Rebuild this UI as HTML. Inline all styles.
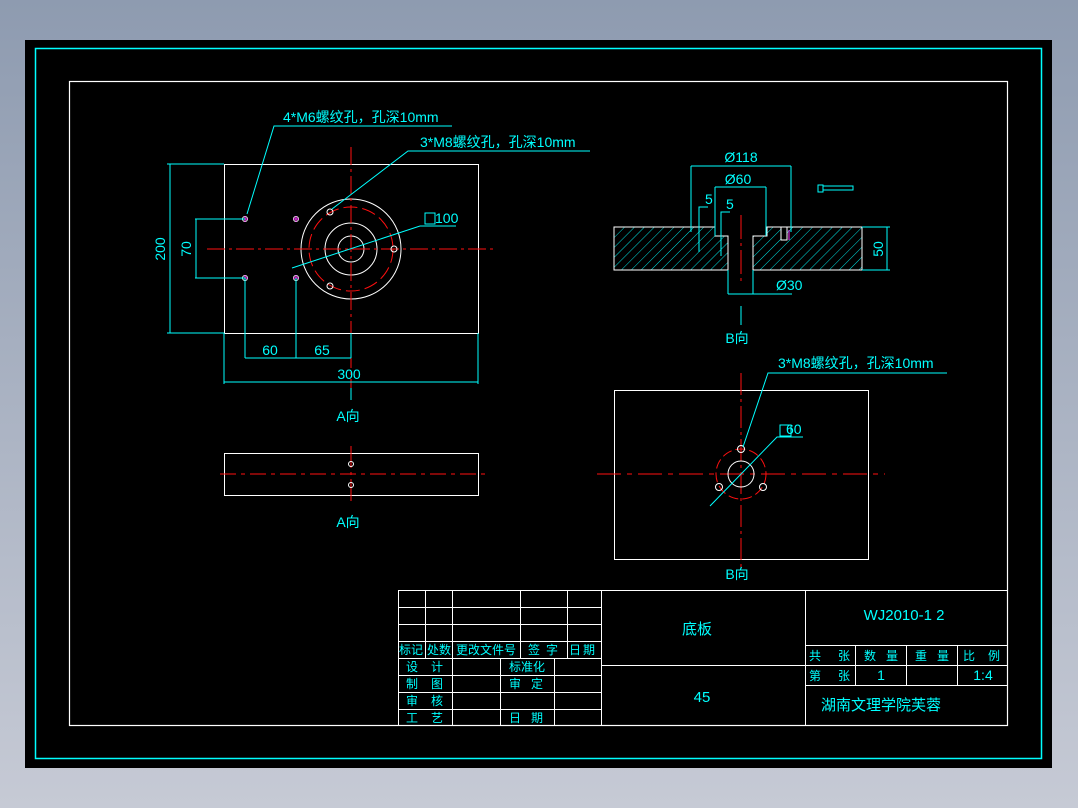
<!DOCTYPE html>
<html><head><meta charset="utf-8"><style>
html,body{margin:0;padding:0;width:1078px;height:808px;overflow:hidden;background:linear-gradient(#8e9bb0,#c6cad5);}
svg{display:block}
text{font-family:"Liberation Sans","Noto Sans CJK SC","WenQuanYi Zen Hei",sans-serif;fill:#00ffff;}
</style></head><body>
<svg width="1078" height="808" viewBox="0 0 1078 808" xmlns="http://www.w3.org/2000/svg">
<defs>
<pattern id="h" patternUnits="userSpaceOnUse" width="7" height="7" patternTransform="rotate(45)">
<line x1="0" y1="0" x2="0" y2="7" stroke="#00e0e0" stroke-width="1"/>
</pattern>
</defs>
<rect x="25" y="40" width="1027" height="728" fill="#000"/>
<rect x="35.5" y="48.5" width="1006" height="710" fill="none" stroke="#00ffff" stroke-width="1.5"/>
<rect x="69.5" y="81.5" width="938" height="644" fill="none" stroke="#fff" stroke-width="1.2"/>

<!-- top-left view -->
<g fill="none" stroke="#fff" stroke-width="1">
<rect x="224.5" y="164.5" width="254" height="169"/>
<circle cx="351" cy="249" r="50"/>
<circle cx="351" cy="249" r="26"/>
<circle cx="351" cy="249" r="13"/>
</g>
<g stroke="#ff1010" stroke-width="1" fill="none">
<line x1="351" y1="147" x2="351" y2="398" stroke-dasharray="18,4,3,4"/>
<line x1="207" y1="249" x2="495" y2="249" stroke-dasharray="18,4,3,4"/>
<circle cx="351" cy="249" r="42" stroke-dasharray="14,5"/>
</g>
<g stroke="#fff" fill="none" stroke-width="1">
<circle cx="245" cy="219" r="2.5"/><circle cx="296" cy="219" r="2.5"/>
<circle cx="245" cy="278" r="2.5"/><circle cx="296" cy="278" r="2.5"/>
<circle cx="330" cy="212" r="3"/><circle cx="330" cy="286" r="3"/><circle cx="394" cy="249" r="3"/>
</g>
<g stroke="#ff30ff" stroke-width="1">
<path d="M242,219h6M245,216v6M293,219h6M296,216v6M242,278h6M245,275v6M293,278h6M296,275v6"/>
</g>
<g stroke="#00ffff" stroke-width="1" fill="none">
<polyline points="247,214 274,126 452,126"/>
<polyline points="332,209 408,151 590,151"/>
<polyline points="292,268 420,226 456,226"/>
<rect x="425" y="213" width="10" height="11"/>
<line x1="170" y1="164" x2="170" y2="333"/>
<line x1="167" y1="164" x2="224" y2="164"/><line x1="167" y1="333" x2="224" y2="333"/>
<line x1="196" y1="219" x2="196" y2="278"/>
<line x1="195" y1="219" x2="245" y2="219"/><line x1="195" y1="278" x2="245" y2="278"/>
<line x1="245" y1="278" x2="245" y2="358"/><line x1="296" y1="278" x2="296" y2="358"/><line x1="351" y1="333" x2="351" y2="358"/>
<line x1="245" y1="358" x2="351" y2="358"/>
<line x1="224" y1="333" x2="224" y2="384"/><line x1="478" y1="333" x2="478" y2="384"/>
<line x1="224" y1="382" x2="478" y2="382"/>
<line x1="351" y1="388" x2="351" y2="400"/>
</g>
<g font-size="14">
<text x="283" y="122">4*M6螺纹孔，孔深10mm</text>
<text x="420" y="147">3*M8螺纹孔，孔深10mm</text>
<text x="435" y="223">100</text>
<text x="270" y="355" text-anchor="middle">60</text>
<text x="322" y="355" text-anchor="middle">65</text>
<text x="349" y="379" text-anchor="middle">300</text>
<text transform="translate(165,249) rotate(-90)" text-anchor="middle">200</text>
<text transform="translate(191,249) rotate(-90)" text-anchor="middle">70</text>
<text x="348" y="421" text-anchor="middle">A向</text>
<text x="348" y="527" text-anchor="middle">A向</text>
</g>

<!-- A side view -->
<rect x="224.5" y="453.5" width="254" height="42" fill="none" stroke="#fff"/>
<line x1="220" y1="474" x2="486" y2="474" stroke="#ff1010" stroke-dasharray="16,5,4,5"/>
<line x1="351" y1="446" x2="351" y2="502" stroke="#ff1010" stroke-dasharray="22,4,3,4"/>
<circle cx="351" cy="464" r="2.5" fill="none" stroke="#fff"/>
<circle cx="351" cy="485" r="2.5" fill="none" stroke="#fff"/>

<!-- section view -->
<path d="M614,227 H715 V236 H728 V270 H614 Z" fill="url(#h)" stroke="#fff"/>
<path d="M753,236 H767 V227 H862 V270 H753 Z" fill="url(#h)" stroke="#fff"/>
<rect x="781" y="227" width="6" height="13" fill="#000" stroke="#fff"/>
<line x1="789" y1="230" x2="789" y2="240" stroke="#ff30ff"/>
<line x1="741" y1="215" x2="741" y2="284" stroke="#ff1010" stroke-dasharray="24,4,3,4"/>
<g stroke="#00ffff" fill="none">
<line x1="691" y1="166" x2="791" y2="166"/><line x1="691" y1="166" x2="691" y2="232"/><line x1="791" y1="166" x2="791" y2="232"/>
<line x1="715" y1="187" x2="766" y2="187"/><line x1="715" y1="187" x2="715" y2="236"/><line x1="766" y1="187" x2="766" y2="236"/>
<polyline points="699,252 699,207 708,207"/>
<polyline points="721,256 721,212 730,212"/>
<line x1="862" y1="227" x2="890" y2="227"/><line x1="862" y1="270" x2="890" y2="270"/><line x1="887" y1="227" x2="887" y2="270"/>
<line x1="728" y1="270" x2="728" y2="294"/><line x1="753" y1="270" x2="753" y2="294"/><line x1="728" y1="294" x2="792" y2="294"/>
<line x1="741" y1="306" x2="741" y2="325"/>
<rect x="818" y="185" width="5" height="7"/><rect x="823" y="186" width="30" height="4"/>
</g>
<g font-size="14">
<text x="741" y="162" text-anchor="middle">Ø118</text>
<text x="738" y="184" text-anchor="middle">Ø60</text>
<text x="705" y="204">5</text><text x="726" y="209">5</text>
<text x="776" y="290">Ø30</text>
<text transform="translate(883,249) rotate(-90)" text-anchor="middle">50</text>
<text x="737" y="343" text-anchor="middle">B向</text>
<text x="737" y="579" text-anchor="middle">B向</text>
<text x="778" y="368">3*M8螺纹孔，孔深10mm</text>
<text x="786" y="434">60</text>
</g>

<!-- B view -->
<rect x="614.5" y="390.5" width="254" height="169" fill="none" stroke="#fff"/>
<line x1="597" y1="474" x2="885" y2="474" stroke="#ff1010" stroke-dasharray="24,6,5,6"/>
<line x1="741" y1="373" x2="741" y2="570" stroke="#ff1010" stroke-dasharray="22,4,3,4"/>
<circle cx="741" cy="474" r="25" fill="none" stroke="#ff1010" stroke-dasharray="10,4"/>
<circle cx="741" cy="474" r="13" fill="none" stroke="#fff"/>
<g fill="none" stroke="#fff"><circle cx="741" cy="449" r="3.5"/><circle cx="719" cy="487" r="3.5"/><circle cx="763" cy="487" r="3.5"/></g>
<g stroke="#00ffff" fill="none">
<polyline points="743,447 768,373 947,373"/>
<polyline points="710,506 777,437 803,437"/>
<rect x="780" y="425" width="11" height="11"/>
</g>

<!-- title block -->
<g stroke="#fff" stroke-width="1" fill="none">
<rect x="398.5" y="590.5" width="609" height="135"/>
<line x1="398" y1="607.5" x2="601" y2="607.5"/><line x1="398" y1="624.5" x2="601" y2="624.5"/>
<line x1="398" y1="641.5" x2="601" y2="641.5"/><line x1="398" y1="658.5" x2="601" y2="658.5"/>
<line x1="398" y1="675.5" x2="601" y2="675.5"/><line x1="398" y1="692.5" x2="601" y2="692.5"/>
<line x1="398" y1="709.5" x2="601" y2="709.5"/>
<line x1="425.5" y1="590" x2="425.5" y2="658"/><line x1="520.5" y1="590" x2="520.5" y2="658"/><line x1="567.5" y1="590" x2="567.5" y2="658"/>
<line x1="452.5" y1="590" x2="452.5" y2="726"/>
<line x1="500.5" y1="658" x2="500.5" y2="726"/><line x1="554.5" y1="658" x2="554.5" y2="726"/>
<line x1="601.5" y1="590" x2="601.5" y2="726"/>
<line x1="601" y1="665.5" x2="805" y2="665.5"/>
<line x1="805.5" y1="590" x2="805.5" y2="726"/>
<line x1="805" y1="645.5" x2="1008" y2="645.5"/><line x1="805" y1="665.5" x2="1008" y2="665.5"/><line x1="805" y1="685.5" x2="1008" y2="685.5"/>
<line x1="855.5" y1="645" x2="855.5" y2="685"/><line x1="906.5" y1="645" x2="906.5" y2="685"/><line x1="957.5" y1="645" x2="957.5" y2="685"/>
</g>
<g font-size="12">
<text x="411" y="654" text-anchor="middle">标记</text>
<text x="439" y="654" text-anchor="middle">处数</text>
<text x="486" y="654" text-anchor="middle">更改文件号</text>
<text x="528" y="654">签</text><text x="546" y="654">字</text>
<text x="569" y="654">日</text><text x="583" y="654">期</text>
<text x="406" y="671">设</text><text x="431" y="671">计</text>
<text x="406" y="688">制</text><text x="431" y="688">图</text>
<text x="406" y="705">审</text><text x="431" y="705">核</text>
<text x="406" y="722">工</text><text x="431" y="722">艺</text>
<text x="527" y="671" text-anchor="middle">标准化</text>
<text x="509" y="688">审</text><text x="531" y="688">定</text>
<text x="509" y="722">日</text><text x="531" y="722">期</text>
<text x="809" y="660">共</text><text x="838" y="660">张</text>
<text x="809" y="680">第</text><text x="838" y="680">张</text>
<text x="864" y="660">数</text><text x="886" y="660">量</text>
<text x="915" y="660">重</text><text x="937" y="660">量</text>
<text x="963" y="660">比</text><text x="988" y="660">例</text>
<text x="881" y="680" text-anchor="middle" font-size="14">1</text>
<text x="983" y="680" text-anchor="middle" font-size="14">1:4</text>
</g>
<g font-size="15">
<text x="697" y="634" text-anchor="middle">底板</text>
<text x="702" y="702" text-anchor="middle">45</text>
<text x="904" y="620" text-anchor="middle">WJ2010-1 2</text>
<text x="881" y="710" text-anchor="middle">湖南文理学院芙蓉</text>
</g>
</svg>
</body></html>
